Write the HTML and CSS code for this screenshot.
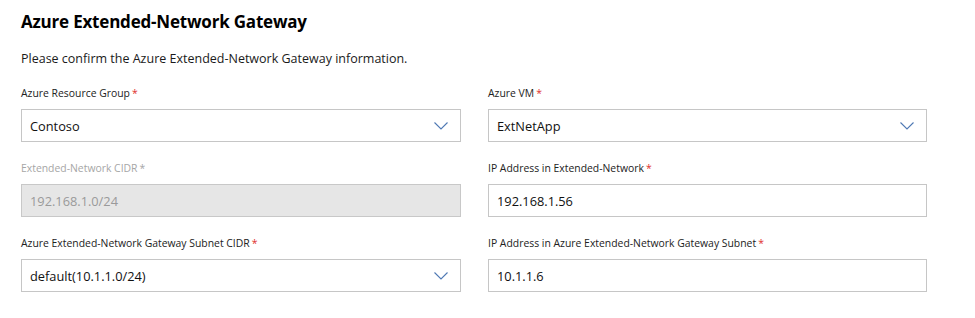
FILE: index.html
```html
<!DOCTYPE html>
<html>
<head>
<meta charset="utf-8">
<link rel="stylesheet" href="styles.css">
</head>
<body>
<div class="page">
  <h1 class="title">Azure Extended-Network Gateway</h1>
  <p class="intro">Please confirm the Azure Extended-Network Gateway information.</p>
  <div class="form">
    <div class="field">
      <div class="label">Azure Resource Group<span class="req">*</span></div>
      <div class="box select"><span class="value">Contoso</span><svg class="chev" width="14" height="8" viewBox="0 0 14 8"><path d="M0.5 0.5 L7 7 L13.5 0.5" fill="none" stroke="#4f79b4" stroke-width="1.1"/></svg></div>
    </div>
    <div class="field">
      <div class="label">Azure VM<span class="req">*</span></div>
      <div class="box select"><span class="value">ExtNetApp</span><svg class="chev" width="14" height="8" viewBox="0 0 14 8"><path d="M0.5 0.5 L7 7 L13.5 0.5" fill="none" stroke="#4f79b4" stroke-width="1.1"/></svg></div>
    </div>
    <div class="field disabled">
      <div class="label">Extended-Network CIDR<span class="req">*</span></div>
      <div class="box"><span class="value">192.168.1.0/24</span></div>
    </div>
    <div class="field">
      <div class="label">IP Address in Extended-Network<span class="req">*</span></div>
      <div class="box"><span class="value">192.168.1.56</span></div>
    </div>
    <div class="field">
      <div class="label">Azure Extended-Network Gateway Subnet CIDR<span class="req">*</span></div>
      <div class="box select"><span class="value">default(10.1.1.0/24)</span><svg class="chev" width="14" height="8" viewBox="0 0 14 8"><path d="M0.5 0.5 L7 7 L13.5 0.5" fill="none" stroke="#4f79b4" stroke-width="1.1"/></svg></div>
    </div>
    <div class="field">
      <div class="label">IP Address in Azure Extended-Network Gateway Subnet<span class="req">*</span></div>
      <div class="box"><span class="value">10.1.1.6</span></div>
    </div>
  </div>
</div>
</body>
</html>
```
FILE: styles.css
```css
html, body {
  margin: 0;
  padding: 0;
  background: #ffffff;
}
.page {
  padding: 11px 0 0 21px;
  font-family: "Open Sans", "Noto Sans", sans-serif;
  color: #000;
}
.title {
  margin: 0;
  font-size: 17px;
  line-height: 22px;
  font-weight: 700;
  letter-spacing: -0.2px;
}
.intro {
  margin: 17px 0 0 0;
  font-size: 12.5px;
  line-height: 18px;
  color: #1a1a1a;
}
.form {
  margin-top: 17px;
  display: grid;
  grid-template-columns: 440px 439px;
  column-gap: 27px;
  row-gap: 18px;
}
.field {
  display: flex;
  flex-direction: column;
}
.label {
  font-size: 10.4px;
  line-height: 16px;
  color: #222;
  margin-bottom: 8px;
  white-space: nowrap;
}
.req {
  color: #e0302c;
  margin-left: 2px;
}
.box {
  box-sizing: border-box;
  height: 33px;
  border: 1px solid #c6c6c6;
  display: flex;
  align-items: center;
  justify-content: space-between;
  padding: 0 12px 0 8px;
  background: #fff;
}
.value {
  font-size: 12.8px;
  color: #111;
}
.disabled .label {
  color: #a6a6a6;
}
.disabled .req {
  color: #a6a6a6;
}
.disabled .box {
  background: #e6e6e6;
  border-color: #c8c8c8;
}
.disabled .value {
  color: #9a9a9a;
}
```
